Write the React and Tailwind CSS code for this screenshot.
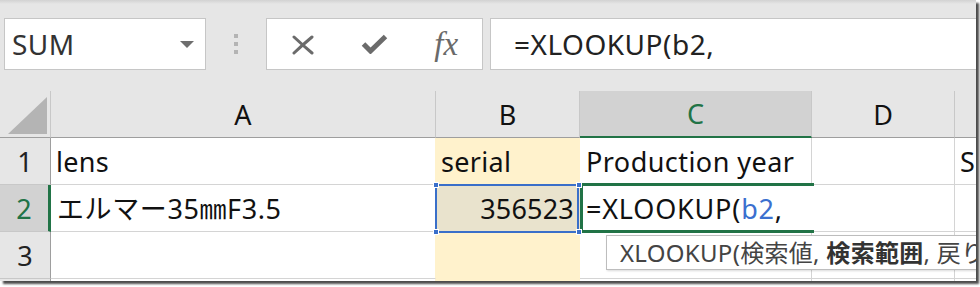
import React from "react";

const cellText = "text-[27px] leading-none text-[#111] whitespace-nowrap";

function RowHead({ n, active }) {
  return (
    <div
      className={
        active
          ? "w-[51px] shrink-0 flex items-center justify-center bg-[#d2d2d2] text-[#217346] border-r-[3px] border-r-[#217346] border-b border-b-[#c8c8c8] text-[27px] leading-none"
          : "w-[51px] shrink-0 flex items-center justify-center bg-[#e6e6e6] text-[#222] border-r border-r-[#9e9e9e] border-b border-b-[#c8c8c8] text-[27px] leading-none"
      }
    >
      {n}
    </div>
  );
}

export default function App() {
  return (
    <div className="w-[980px] h-[287px] bg-white">
      <div className="relative w-[976px] h-[281px] overflow-hidden bg-[#e6e6e6] shadow-[3px_3px_2px_rgba(0,0,0,0.7)] font-['Noto_Sans','Noto_Sans_CJK_JP',sans-serif]">
        {/* toolbar */}
        <div className="h-[91px] flex items-start pt-[18px] pl-[4px] bg-[linear-gradient(to_bottom,#d2d2d2,#e6e6e6_4px)]">
          <div className="w-[202px] h-[52px] shrink-0 bg-white border border-[#c6c6c6] flex items-center justify-between pl-[7px] pr-[11px]">
            <span className="text-[28px] leading-none text-[#333] tracking-[0.5px]">SUM</span>
            <svg width="14" height="7" viewBox="0 0 14 7">
              <polygon points="0,0 14,0 7,7" fill="#6e6e6e" />
            </svg>
          </div>
          <div className="w-[60px] h-[52px] shrink-0 flex flex-col items-center justify-center gap-[4px]">
            <div className="w-[4px] h-[4px] bg-[#b4b4b4]" />
            <div className="w-[4px] h-[4px] bg-[#b4b4b4]" />
            <div className="w-[4px] h-[4px] bg-[#b4b4b4]" />
          </div>
          <div className="w-[217px] h-[52px] shrink-0 bg-white border border-[#c6c6c6] flex">
            <div className="w-[72px] h-full flex items-center justify-center">
              <svg width="24" height="21" viewBox="0 0 24 21">
                <path
                  d="M3 3 Q 11 10.5 21 19 M21 3 Q 12 10.5 3 19"
                  stroke="#6b6b6b"
                  strokeWidth="3"
                  fill="none"
                  strokeLinecap="round"
                />
              </svg>
            </div>
            <div className="w-[72px] h-full flex items-center justify-center">
              <svg width="27" height="20" viewBox="0 0 27 20">
                <path
                  d="M2.5 10 L9.5 17 L24.5 2.5"
                  stroke="#6b6b6b"
                  strokeWidth="5"
                  fill="none"
                  strokeLinejoin="miter"
                />
              </svg>
            </div>
            <div className="w-[72px] h-full flex items-center justify-center">
              <span className="font-['Liberation_Serif',serif] italic text-[33px] leading-none text-[#6a6a6a]">
                fx
              </span>
            </div>
          </div>
          <div className="ml-[7px] flex-1 h-[52px] bg-white border border-[#c6c6c6] border-r-0 flex items-center pl-[23px]">
            <span className="text-[28px] leading-none text-[#222] tracking-[0.5px]">=XLOOKUP(b2,</span>
          </div>
        </div>

        {/* column headers */}
        <div className="flex h-[47px]">
          <div className="w-[51px] shrink-0 relative border-r border-r-[#c8c8c8] border-b border-b-[#9e9e9e]">
            <svg className="absolute left-0 top-0" width="50" height="46" viewBox="0 0 50 46">
              <polygon points="47,6 47,43 8,43" fill="#b4b4b4" />
            </svg>
          </div>
          <div className="w-[385px] shrink-0 flex items-center justify-center border-r border-r-[#c8c8c8] border-b border-b-[#9e9e9e] text-[27px] leading-none text-[#111]">
            A
          </div>
          <div className="w-[144px] shrink-0 flex items-center justify-center border-r border-r-[#c8c8c8] border-b border-b-[#9e9e9e] text-[27px] leading-none text-[#111]">
            B
          </div>
          <div className="w-[232px] shrink-0 flex items-center justify-center bg-[#d2d2d2] border-r border-r-[#c8c8c8] border-b-2 border-b-[#217346] text-[27px] leading-none text-[#217346]">
            C
          </div>
          <div className="w-[143px] shrink-0 flex items-center justify-center border-r border-r-[#c8c8c8] border-b border-b-[#9e9e9e] text-[27px] leading-none text-[#111]">
            D
          </div>
          <div className="flex-1 border-b border-b-[#9e9e9e]" />
        </div>

        {/* row 1 */}
        <div className="flex h-[47px]">
          <RowHead n="1" />
          <div className="w-[385px] shrink-0 bg-white flex items-center pl-[5px] border-r border-r-[#fff2cc] border-b border-b-[#d4d4d4]">
            <span className={cellText + " tracking-[0.3px]"}>lens</span>
          </div>
          <div className="w-[144px] shrink-0 bg-[#fff2cc] flex items-center pl-[5px] border-r border-r-[#fff2cc] border-b border-b-[#fff2cc]">
            <span className={cellText + " tracking-[0.3px]"}>serial</span>
          </div>
          <div className="w-[232px] shrink-0 bg-white flex items-center pl-[6px] border-r border-r-[#d4d4d4] border-b border-b-[#d4d4d4]">
            <span className={cellText + " tracking-[0.45px]"}>Production year</span>
          </div>
          <div className="w-[143px] shrink-0 bg-white border-r border-r-[#d4d4d4] border-b border-b-[#d4d4d4]" />
          <div className="flex-1 bg-white flex items-center pl-[5px] border-b border-b-[#d4d4d4] overflow-hidden">
            <span className={cellText}>S</span>
          </div>
        </div>

        {/* row 2 */}
        <div className="flex h-[47px]">
          <RowHead n="2" active />
          <div className="w-[385px] shrink-0 bg-white flex items-center pl-[6px] border-r border-r-[#d4d4d4] border-b border-b-[#d4d4d4]">
            <span className={cellText + " tracking-[0.6px]"}>エルマー35㎜F3.5</span>
          </div>
          <div className="relative w-[144px] shrink-0 bg-[#e9e3cd] flex items-center justify-end pr-[5px] border-r border-r-[#e9e3cd] border-b border-b-[#e9e3cd]">
            <span className={cellText + " tracking-[0.2px]"}>356523</span>
            <div className="absolute left-[-1px] top-[-1px] right-[0px] bottom-[-2px] border-2 border-[#3a6fc9] z-10" />
            <div className="absolute left-[-3px] top-[-3px] w-[6px] h-[6px] bg-[#3a6fc9] border border-white z-20" />
            <div className="absolute right-[-3px] top-[-3px] w-[6px] h-[6px] bg-[#3a6fc9] border border-white z-20" />
            <div className="absolute left-[-3px] bottom-[-4px] w-[6px] h-[6px] bg-[#3a6fc9] border border-white z-20" />
            <div className="absolute right-[-3px] bottom-[-4px] w-[6px] h-[6px] bg-[#3a6fc9] border border-white z-20" />
          </div>
          <div className="relative w-[232px] shrink-0 bg-white flex items-center pl-[6px] border-b border-b-[#d4d4d4]">
            <span className={cellText + " tracking-[0.8px]"}>
              =XLOOKUP(<span className="text-[#3b70cf]">b2</span>,
            </span>
            <div className="absolute left-[0px] top-[-2px] right-[-2px] bottom-[-2px] border-t-[3px] border-b-[3px] border-l-[3px] border-[#217346] z-10" />
          </div>
          <div className="w-[143px] shrink-0 bg-white border-r border-r-[#d4d4d4] border-b border-b-[#d4d4d4]" />
          <div className="flex-1 bg-white border-b border-b-[#d4d4d4]" />
        </div>

        {/* row 3 */}
        <div className="flex h-[47px]">
          <RowHead n="3" />
          <div className="w-[385px] shrink-0 bg-white border-r border-r-[#fff2cc] border-b border-b-[#d4d4d4]" />
          <div className="w-[144px] shrink-0 bg-[#fff2cc] border-r border-r-[#fff2cc] border-b border-b-[#fff2cc]" />
          <div className="w-[232px] shrink-0 bg-white border-r border-r-[#d4d4d4] border-b border-b-[#d4d4d4]" />
          <div className="w-[143px] shrink-0 bg-white border-r border-r-[#d4d4d4] border-b border-b-[#d4d4d4]" />
          <div className="flex-1 bg-white border-b border-b-[#d4d4d4]" />
        </div>

        {/* row 4 (partially visible) */}
        <div className="flex h-[47px]">
          <RowHead n="" />
          <div className="w-[385px] shrink-0 bg-white border-r border-r-[#fff2cc]" />
          <div className="w-[144px] shrink-0 bg-[#fff2cc]" />
          <div className="w-[232px] shrink-0 bg-white border-r border-r-[#d4d4d4]" />
          <div className="w-[143px] shrink-0 bg-white border-r border-r-[#d4d4d4]" />
          <div className="flex-1 bg-white" />
        </div>

        {/* function tooltip */}
        <div className="absolute left-[606px] top-[235px] h-[35px] w-[500px] bg-white border border-[#bdbdbd] shadow-[1px_1px_2px_rgba(0,0,0,0.15)] flex items-center pl-[13px] z-30">
          <span className="text-[24px] leading-none text-[#444] whitespace-nowrap tracking-[0.3px]">
            XLOOKUP(検索値, <b className="font-bold text-[#333]">検索範囲</b>, 戻り範囲, [見つからない場合], [一致モード], [検索モード])
          </span>
        </div>
      </div>
    </div>
  );
}
